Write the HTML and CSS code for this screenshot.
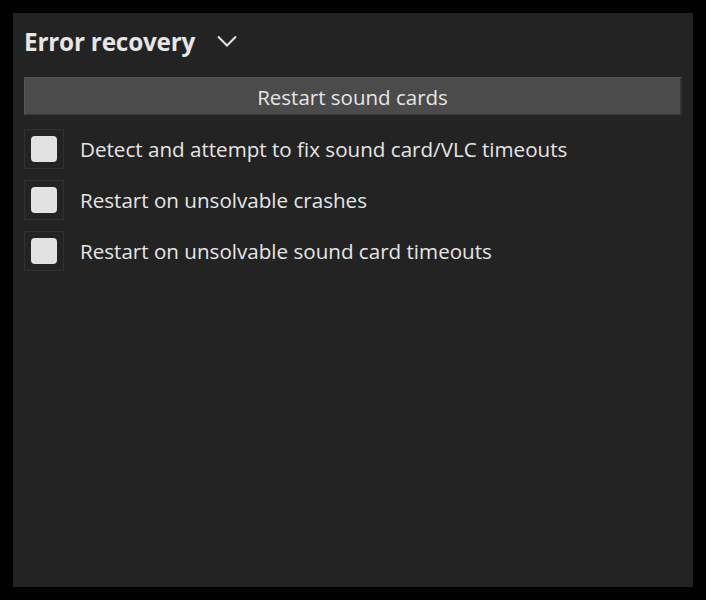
FILE: index.html
```html
<!DOCTYPE html>
<html>
<head>
<meta charset="utf-8">
<link rel="stylesheet" href="styles.css">
</head>
<body>
<div class="panel">
  <div class="header">
    <span class="title">Error recovery</span>
    <svg class="chevron" width="20" height="12" viewBox="0 0 20 12"><polyline points="1,1.5 10,10.5 19,1.5" fill="none" stroke="#e4e4e4" stroke-width="2"/></svg>
  </div>
  <div class="button">Restart sound cards</div>
  <div class="options">
    <label class="option"><span class="frame"><span class="box"></span></span><span class="label">Detect and attempt to fix sound card/VLC timeouts</span></label>
    <label class="option"><span class="frame"><span class="box"></span></span><span class="label">Restart on unsolvable crashes</span></label>
    <label class="option"><span class="frame"><span class="box"></span></span><span class="label">Restart on unsolvable sound card timeouts</span></label>
  </div>
</div>
</body>
</html>
```

FILE: styles.css
```css
html, body {
  margin: 0;
  padding: 0;
  background: #000;
}
body {
  font-family: "Open Sans", "Noto Sans", sans-serif;
  color: #e6e6e6;
}
.panel {
  margin: 13px;
  width: 680px;
  height: 574px;
  box-sizing: border-box;
  background: #232323;
  padding: 12px 11px 0 11px;
}
.header {
  display: flex;
  align-items: center;
  height: 32px;
}
.title {
  font-size: 24.3px;
  font-weight: 700;
  letter-spacing: -0.2px;
}
.chevron {
  margin-left: 22px;
}
.button {
  margin-top: 20px;
  height: 38px;
  box-sizing: border-box;
  background: #4b4b4b;
  border-top: 1px solid #555;
  border-left: 1px solid #555;
  border-right: 2px solid #333;
  border-bottom: 1px solid #3a3a3a;
  display: flex;
  align-items: center;
  justify-content: center;
  padding-top: 2px;
  font-size: 20.5px;
}
.options {
  margin-top: 14px;
  display: flex;
  flex-direction: column;
  gap: 11px;
}
.option {
  display: flex;
  align-items: center;
  height: 40px;
}
.frame {
  width: 40px;
  height: 40px;
  box-sizing: border-box;
  border: 1px solid #313131;
  display: flex;
  align-items: center;
  justify-content: center;
}
.box {
  width: 26px;
  height: 26px;
  border-radius: 4px;
  background: #e2e2e2;
}
.label {
  margin-left: 16px;
  font-size: 20.6px;
}
```
